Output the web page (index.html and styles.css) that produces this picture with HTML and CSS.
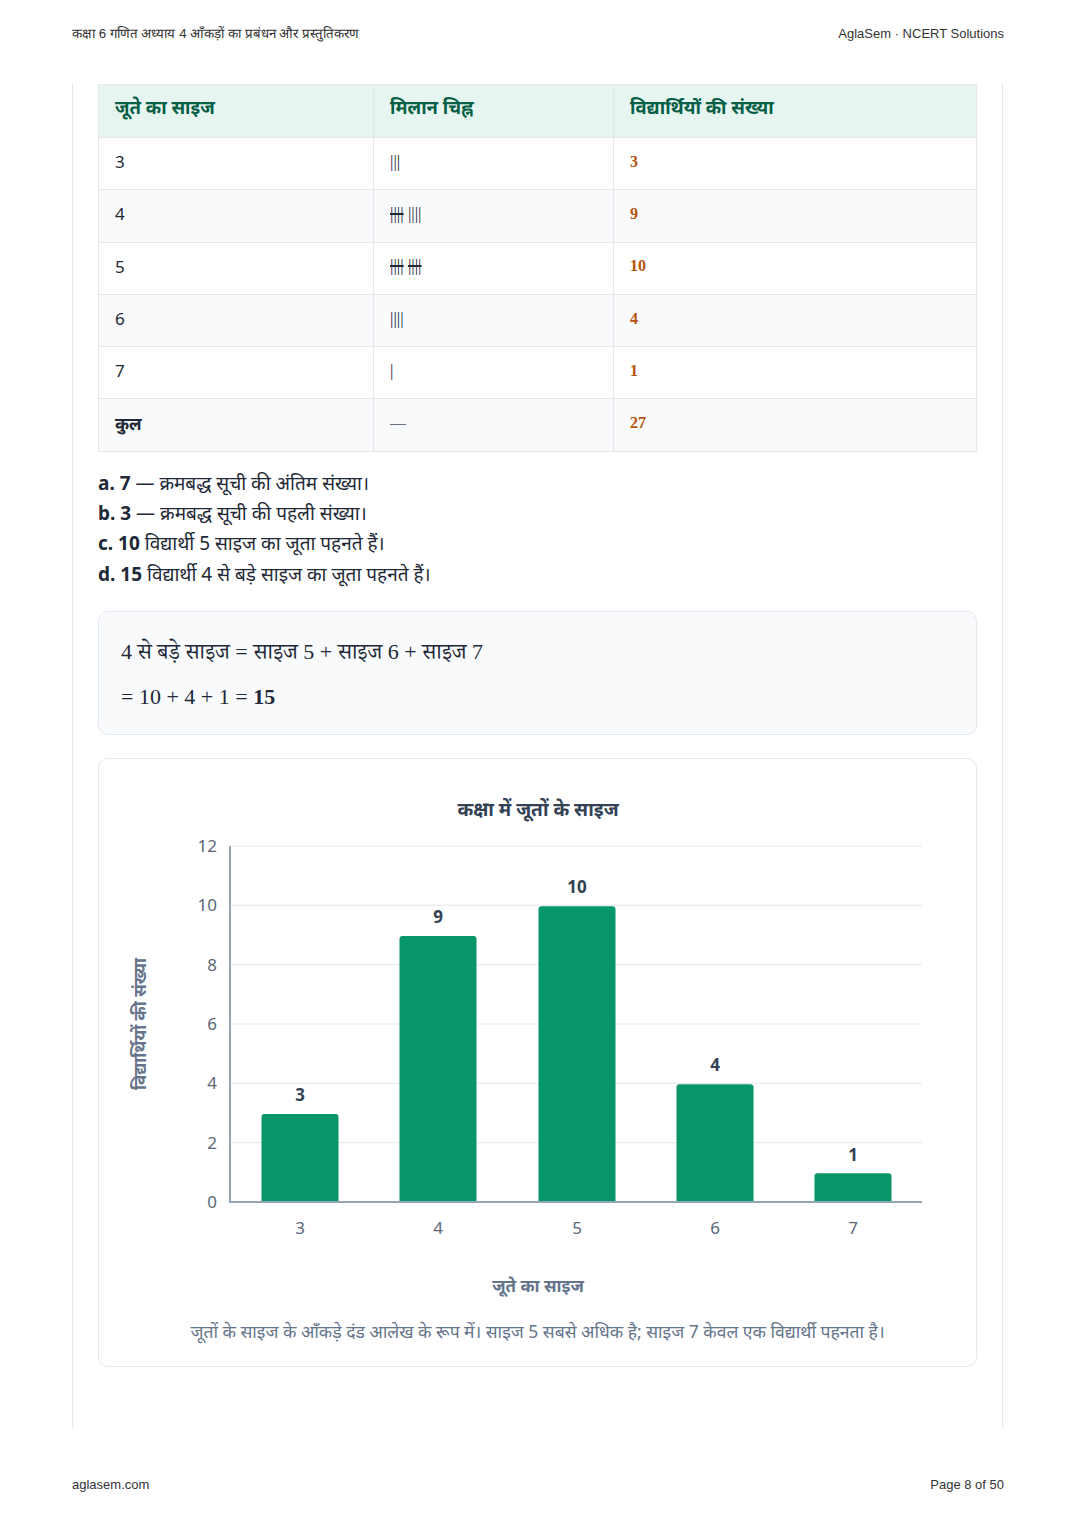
FILE: index.html
```html
<!DOCTYPE html>
<html lang="hi">
<head>
<meta charset="utf-8">
<title>कक्षा 6 गणित अध्याय 4</title>
<link rel="stylesheet" href="styles.css">
</head>
<body>
<div class="page">
  <header class="top">
    <span>कक्षा 6 गणित अध्याय 4 आँकड़ों का प्रबंधन और प्रस्तुतिकरण</span>
    <span>AglaSem · NCERT Solutions</span>
  </header>
  <main class="frame">
    <table class="tally">
      <thead>
        <tr><th class="c1">जूते का साइज</th><th class="c2">मिलान चिह्न</th><th class="c3">विद्यार्थियों की संख्या</th></tr>
      </thead>
      <tbody>
        <tr><td>3</td><td class="marks">|||</td><td class="num">3</td></tr>
        <tr><td>4</td><td class="marks"><span class="five">||||</span> ||||</td><td class="num">9</td></tr>
        <tr><td>5</td><td class="marks"><span class="five">||||</span> <span class="five">||||</span></td><td class="num">10</td></tr>
        <tr><td>6</td><td class="marks">||||</td><td class="num">4</td></tr>
        <tr><td>7</td><td class="marks">|</td><td class="num">1</td></tr>
        <tr><td class="bold">कुल</td><td class="dash">—</td><td class="num">27</td></tr>
      </tbody>
    </table>

    <div class="answers">
      <p><b>a. 7</b> — क्रमबद्ध सूची की अंतिम संख्या।</p>
      <p><b>b. 3</b> — क्रमबद्ध सूची की पहली संख्या।</p>
      <p><b>c. 10</b> विद्यार्थी 5 साइज का जूता पहनते हैं।</p>
      <p><b>d. 15</b> विद्यार्थी 4 से बड़े साइज का जूता पहनते हैं।</p>
    </div>

    <div class="formula">
      <p>4 से बड़े साइज = साइज 5 + साइज 6 + साइज 7</p>
      <p>= 10 + 4 + 1 = <b>15</b></p>
    </div>

    <figure class="chart">
      <svg class="plot" width="877" height="550" viewBox="0 0 877 550">
        <text class="title" x="439" y="56" text-anchor="middle">कक्षा में जूतों के साइज</text>
        <g class="grid">
          <line x1="131" y1="86" x2="823" y2="86"/>
          <line x1="131" y1="145.3" x2="823" y2="145.3"/>
          <line x1="131" y1="204.7" x2="823" y2="204.7"/>
          <line x1="131" y1="264" x2="823" y2="264"/>
          <line x1="131" y1="323.3" x2="823" y2="323.3"/>
          <line x1="131" y1="382.7" x2="823" y2="382.7"/>
        </g>
        <g class="ticks">
          <text x="118" y="92" text-anchor="end">12</text>
          <text x="118" y="151" text-anchor="end">10</text>
          <text x="118" y="211" text-anchor="end">8</text>
          <text x="118" y="270" text-anchor="end">6</text>
          <text x="118" y="329" text-anchor="end">4</text>
          <text x="118" y="389" text-anchor="end">2</text>
          <text x="118" y="448" text-anchor="end">0</text>
        </g>
        <g class="bars">
          <path d="M162.5 442 V357 a3 3 0 0 1 3 -3 H236.5 a3 3 0 0 1 3 3 V442 Z"/>
          <path d="M300.5 442 V179 a3 3 0 0 1 3 -3 H374.5 a3 3 0 0 1 3 3 V442 Z"/>
          <path d="M439.5 442 V149.3 a3 3 0 0 1 3 -3 H513.5 a3 3 0 0 1 3 3 V442 Z"/>
          <path d="M577.5 442 V327.3 a3 3 0 0 1 3 -3 H651.5 a3 3 0 0 1 3 3 V442 Z"/>
          <path d="M715.5 442 V416.3 a3 3 0 0 1 3 -3 H789.5 a3 3 0 0 1 3 3 V442 Z"/>
        </g>
        <g class="vals">
          <text x="201" y="341" text-anchor="middle">3</text>
          <text x="339" y="163" text-anchor="middle">9</text>
          <text x="478" y="133" text-anchor="middle">10</text>
          <text x="616" y="311" text-anchor="middle">4</text>
          <text x="754" y="401" text-anchor="middle">1</text>
        </g>
        <line class="axis" x1="131" y1="86" x2="131" y2="442"/>
        <line class="axis" x1="130" y1="442" x2="823" y2="442"/>
        <g class="xlab">
          <text x="201" y="474" text-anchor="middle">3</text>
          <text x="339" y="474" text-anchor="middle">4</text>
          <text x="478" y="474" text-anchor="middle">5</text>
          <text x="616" y="474" text-anchor="middle">6</text>
          <text x="754" y="474" text-anchor="middle">7</text>
        </g>
        <text class="axtitle" x="439" y="532" text-anchor="middle">जूते का साइज</text>
        <text class="axtitle" x="0" y="0" text-anchor="middle" transform="translate(47 264) rotate(-90)">विद्यार्थियों की संख्या</text>
      </svg>
      <figcaption>जूतों के साइज के आँकड़े दंड आलेख के रूप में। साइज 5 सबसे अधिक है; साइज 7 केवल एक विद्यार्थी पहनता है।</figcaption>
    </figure>
  </main>
  <footer class="bottom">
    <span>aglasem.com</span>
    <span>Page 8 of 50</span>
  </footer>
</div>
</body>
</html>
```

FILE: styles.css
```css
* { box-sizing: border-box; }
html, body { margin: 0; padding: 0; background: #fff; }
body { font-family: "Noto Sans", "Open Sans", "Noto Sans Devanagari", sans-serif; color: #1f2937; }

.page { width: 1076px; }

.top, .bottom {
  display: flex;
  justify-content: space-between;
  font-family: "Liberation Sans", Arial, sans-serif;
  font-size: 13px;
  line-height: 16px;
  color: #333;
  padding: 0 72px;
}
.top { height: 83px; padding-top: 26px; }
.top span:first-child { font-size: 13.3px; }
.bottom { padding-top: 49px; }

.frame {
  margin: 0 73px 0 72px;
  height: 1345px;
  border-left: 1px solid #e5e7eb;
  border-right: 1px solid #e5e7eb;
  padding: 1px 25px 0 25px;
}

.tally {
  width: 879px;
  border-collapse: collapse;
  font-size: 17px;
}
.tally th, .tally td {
  border: 1px solid #e5e7eb;
  text-align: left;
  padding: 0 16px;
  vertical-align: middle;
}
.tally th {
  background: #e7f5f0;
  color: #065f46;
  font-weight: 700;
  font-size: 18.5px;
  height: 53px;
  padding-bottom: 10px;
}
.tally td { height: 52.3px; padding-bottom: 4px; }
.tally tbody tr:nth-child(even) td { background: #f8fafc; }
.c1 { width: 275px; }
.c2 { width: 240px; }
.tally .num {
  font-family: "Liberation Serif", serif;
  font-weight: 700;
  color: #b45309;
  font-size: 16px;
}
.tally .marks {
  font-family: "Liberation Serif", serif;
  font-size: 17px;
  color: #1f2937;
}
.five { text-decoration: line-through; text-decoration-thickness: 1.5px; }
.tally .dash {
  font-family: "Liberation Serif", serif;
  color: #6b7280;
  font-size: 16px;
}
.bold { font-weight: 700; }

.answers { margin-top: 16px; font-size: 19px; line-height: 30.3px; }
.answers p { margin: 0; }

.formula {
  margin-top: 22px;
  background: #f8fafc;
  border: 1px solid #e2e8f0;
  border-radius: 10px;
  padding: 25px 22px 22px;
  font-family: "Liberation Serif", "Noto Serif Devanagari", serif;
  font-size: 22px;
  line-height: 30px;
  color: #1f2937;
}
.formula p { margin: 0; }
.formula p + p { margin-top: 15px; }

.chart {
  margin: 23px 0 0;
  border: 1px solid #e2e8f0;
  border-radius: 10px;
  background: #fff;
  padding: 1px 0 23px;
}
.plot { display: block; font-family: "Noto Sans", "Open Sans", "Noto Sans Devanagari", sans-serif; }
.title { font-size: 19px; font-weight: 700; fill: #334155; }
.grid line { stroke: #e5e7eb; stroke-width: 1; }
.ticks text, .xlab text { font-size: 17px; fill: #5b6778; }
.bars path { fill: #079669; }
.vals text { font-size: 17px; font-weight: 700; fill: #334155; }
.axis { stroke: #94a3b8; stroke-width: 2; }
.axtitle { font-size: 17px; font-weight: 700; fill: #64748b; }

figcaption {
  margin-top: 9px;
  text-align: center;
  font-size: 17.5px;
  line-height: 24px;
  color: #64748b;
}
```
